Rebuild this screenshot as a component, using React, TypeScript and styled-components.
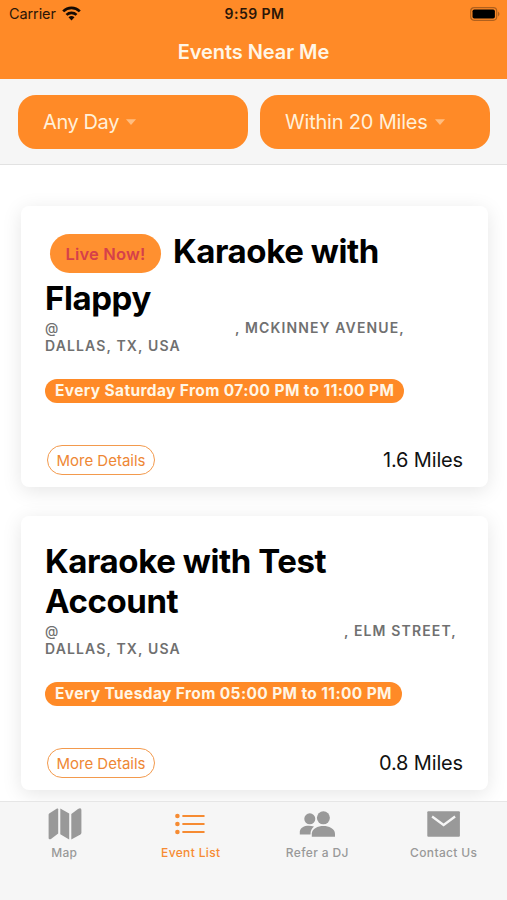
import React from "react";
import styled, { createGlobalStyle } from "styled-components";

const ORANGE = "#ff8a27";

const GlobalStyle = createGlobalStyle`
  * { box-sizing: border-box; }
  body { margin: 0; background: #fff; font-family: Inter, "Liberation Sans", sans-serif; }
`;

const Screen = styled.div`
  width: 507px;
  height: 900px;
  display: flex;
  flex-direction: column;
  overflow: hidden;
  background: #fff;
  white-space: nowrap;
`;

const Header = styled.header`
  height: 79px;
  flex: none;
  background: ${ORANGE};
`;

const StatusBar = styled.div`
  display: grid;
  grid-template-columns: 1fr auto 1fr;
  height: 27px;
  align-items: center;
  padding: 0 7px 0 9px;
  color: #2a1608;
`;

const Carrier = styled.div`
  display: flex;
  align-items: center;
  gap: 6px;
  font-size: 14.5px;
  letter-spacing: -0.1px;
`;

const Clock = styled.div`
  font-size: 14px;
  font-weight: 600;
  letter-spacing: 0.45px;
`;

const Battery = styled.div`
  display: flex;
  justify-content: flex-end;
`;

const PageTitle = styled.h1`
  margin: 0;
  height: 50px;
  line-height: 51px;
  text-align: center;
  color: #fff6e6;
  font-size: 20px;
  font-weight: 600;
  letter-spacing: -0.07px;
`;

const Filters = styled.div`
  flex: none;
  height: 86px;
  display: grid;
  grid-template-columns: 1fr 1fr;
  gap: 12px;
  padding: 16px 17px 15px 18px;
  background: #f6f6f6;
  border-bottom: 1px solid #e2e2e2;
`;

const FilterButton = styled.button<{ $tracking: number }>`
  display: flex;
  align-items: center;
  gap: 6px;
  border: 0;
  height: 54px;
  border-radius: 18px;
  padding: 0 25px;
  background: ${ORANGE};
  color: #fff0d9;
  font: 400 20px Inter, sans-serif;
  letter-spacing: ${(p) => p.$tracking}px;
`;

const List = styled.main`
  flex: 1;
  min-height: 0;
  overflow: hidden;
  padding: 41px 19px 0 21px;
  display: flex;
  flex-direction: column;
  gap: 29px;
`;

const Card = styled.article<{ $height: number }>`
  flex: none;
  height: ${(p) => p.$height}px;
  display: flex;
  flex-direction: column;
  padding: 25px 25px 12px 24px;
  border-radius: 8px;
  background: #fff;
  box-shadow: 0 4px 20px rgba(0, 0, 0, 0.1);
`;

const Title = styled.h2`
  margin: 0;
  color: #000;
  font-size: 33px;
  font-weight: 700;
  line-height: 40px;
  letter-spacing: -0.42px;
`;

const TitleLine = styled.div<{ $tall?: boolean }>`
  display: flex;
  align-items: flex-start;
  height: ${(p) => (p.$tall ? 47 : 40)}px;
`;

const LiveBadge = styled.span`
  height: 39px;
  width: 111px;
  margin: 3px 12px 0 5px;
  border-radius: 20px;
  background: #ff9030;
  color: #d6404a;
  font-size: 16.5px;
  font-weight: 600;
  line-height: 40px;
  letter-spacing: 0.2px;
  text-align: center;
`;

const Address = styled.div`
  margin-top: 1px;
  color: #707070;
  font-size: 14px;
  font-weight: 600;
  line-height: 18px;
  letter-spacing: 1.13px;
`;

const AddressLine = styled.div<{ $gap?: number }>`
  display: flex;
  gap: ${(p) => p.$gap ?? 0}px;
`;

const At = styled.span`
  width: 13px;
  font-size: 13.5px;
  font-weight: 500;
  letter-spacing: 0;
`;

const Schedule = styled.div`
  align-self: flex-start;
  margin-top: 24px;
  height: 24px;
  padding: 0 10px;
  border-radius: 12px;
  background: ${ORANGE};
  color: #fff6e6;
  font-size: 15.5px;
  font-weight: 700;
  line-height: 24px;
  letter-spacing: 0.38px;
`;

const CardFooter = styled.div`
  margin-top: auto;
  display: flex;
  align-items: center;
  justify-content: space-between;
`;

const DetailsButton = styled.button`
  width: 108px;
  height: 30px;
  margin-left: 2px;
  padding: 0;
  border: 1.5px solid #f39a4d;
  border-radius: 15px;
  background: #fff;
  color: #ee8734;
  font: 400 15px Inter, sans-serif;
`;

const Distance = styled.span`
  color: #111;
  font-size: 20px;
  letter-spacing: -0.15px;
`;

const TabBar = styled.nav`
  flex: none;
  height: 99px;
  display: grid;
  grid-template-columns: repeat(4, 1fr);
  padding-left: 1px;
  background: #f6f6f6;
  border-top: 1px solid #e6e6e6;
`;

const Tab = styled.a<{ $active?: boolean }>`
  display: flex;
  flex-direction: column;
  align-items: center;
  color: ${(p) => (p.$active ? "#f68b32" : "#999")};
  font-size: 12px;
  font-weight: 500;
  line-height: 16px;
  letter-spacing: 0.35px;
  padding-top: 4px;
`;

const TabIcon = styled.svg`
  display: block;
  width: 36px;
  height: 36px;
  margin-bottom: 3px;
  fill: currentColor;
`;

const Caret = () => (
  <svg width="12" height="8" viewBox="0 0 12 8">
    <path d="M1 1.2h10L6 7z" fill="#ffbd80" />
  </svg>
);

const Wifi = () => (
  <svg width="19" height="15" viewBox="0 0 19 15" fill="none" stroke="#160b04" strokeWidth="2.7">
    <path d="M1.2 5.4C5.8 .8 13.2 .8 17.8 5.4" />
    <path d="M4.5 8.9C7.3 6.2 11.7 6.2 14.5 8.9" />
    <path d="M9.5 14.4 6.5 11.2Q9.5 8.7 12.5 11.2Z" fill="#160b04" stroke="none" />
  </svg>
);

type EventItem = {
  live?: boolean;
  title: [string, string];
  street: string;
  gap: number;
  schedule: string;
  distance: string;
  height: number;
};

const events: EventItem[] = [
  {
    live: true,
    title: ["Karaoke with", "Flappy"],
    street: ", MCKINNEY AVENUE,",
    gap: 177,
    schedule: "Every Saturday From 07:00 PM to 11:00 PM",
    distance: "1.6 Miles",
    height: 281,
  },
  {
    title: ["Karaoke with Test", "Account"],
    street: ", ELM STREET,",
    gap: 286,
    schedule: "Every Tuesday From 05:00 PM to 11:00 PM",
    distance: "0.8 Miles",
    height: 274,
  },
];

const EventCard = ({ event }: { event: EventItem }) => (
  <Card $height={event.height}>
    <Title>
      <TitleLine $tall={event.live}>
        {event.live && <LiveBadge>Live Now!</LiveBadge>}
        <span>{event.title[0]}</span>
      </TitleLine>
      <TitleLine>{event.title[1]}</TitleLine>
    </Title>
    <Address>
      <AddressLine $gap={event.gap}>
        <At>@</At>
        <span>{event.street}</span>
      </AddressLine>
      <AddressLine>DALLAS, TX, USA</AddressLine>
    </Address>
    <Schedule>{event.schedule}</Schedule>
    <CardFooter>
      <DetailsButton>More Details</DetailsButton>
      <Distance>{event.distance}</Distance>
    </CardFooter>
  </Card>
);

export default function App() {
  return (
    <>
      <GlobalStyle />
      <Screen>
        <Header>
          <StatusBar>
            <Carrier>
              Carrier <Wifi />
            </Carrier>
            <Clock>9:59 PM</Clock>
            <Battery>
              <svg width="30" height="14" viewBox="0 0 30 14">
                <rect x=".7" y=".7" width="26" height="12.6" rx="3.5" fill="none" stroke="#b0601d" strokeWidth="1.2" />
                <rect x="2.5" y="2.5" width="22.4" height="9" rx="1.8" fill="#000" />
                <path d="M28 4.5Q31 7 28 9.5Z" fill="#b0601d" />
              </svg>
            </Battery>
          </StatusBar>
          <PageTitle>Events Near Me</PageTitle>
        </Header>
        <Filters>
          <FilterButton $tracking={-0.4}>
            Any Day <Caret />
          </FilterButton>
          <FilterButton $tracking={-0.2}>
            Within 20 Miles <Caret />
          </FilterButton>
        </Filters>
        <List>
          {events.map((event) => (
            <EventCard key={event.schedule} event={event} />
          ))}
        </List>
        <TabBar>
          <Tab>
            <TabIcon viewBox="-1 0 36 36">
              <path d="M1.6 8.8Q1.6 7.8 2.5 7.2L10 2.6Q11.2 2 11.2 3.2V27.5L4 33Q1.6 34 1.6 32Z" />
              <path d="M13.3 2.5 22.2 7.5V33.5L13.3 28.2Z" />
              <path d="M24.3 8 31 2.9Q34.4 1.3 34.4 4V26.8Q34.4 28 33.4 28.6L24.3 33.5Z" />
            </TabIcon>
            Map
          </Tab>
          <Tab $active>
            <TabIcon viewBox="0.8 0 36 36">
              <circle cx="5.2" cy="10" r="2.3" />
              <circle cx="5.2" cy="18" r="2.3" />
              <circle cx="5.2" cy="26" r="2.3" />
              <path d="M11 10H31.5M11 18H31.5M11 26H31.5" stroke="currentColor" strokeWidth="2.2" strokeLinecap="round" />
            </TabIcon>
            Event List
          </Tab>
          <Tab>
            <TabIcon viewBox="0 0 36 36">
              <circle cx="10.8" cy="12.8" r="5.5" />
              <path d="M.8 28.5V25.5C1.5 20.5 8 18.6 15 20.5C12.8 22.3 11.5 24.5 11.5 28.5Z" />
              <circle cx="24.4" cy="11.8" r="6.5" />
              <path d="M12.8 30.8V27.5C13.5 17.5 35.3 17.5 36 27.5V30.8Z" />
            </TabIcon>
            Refer a DJ
          </Tab>
          <Tab>
            <TabIcon viewBox="0.4 0 36 36">
              <rect x="1.7" y="5.2" width="32.6" height="25.6" rx="1" />
              <path d="M6.5 10.5 18 19 29.5 10.5" fill="none" stroke="#f6f6f6" strokeWidth="2.3" />
            </TabIcon>
            Contact Us
          </Tab>
        </TabBar>
      </Screen>
    </>
  );
}
